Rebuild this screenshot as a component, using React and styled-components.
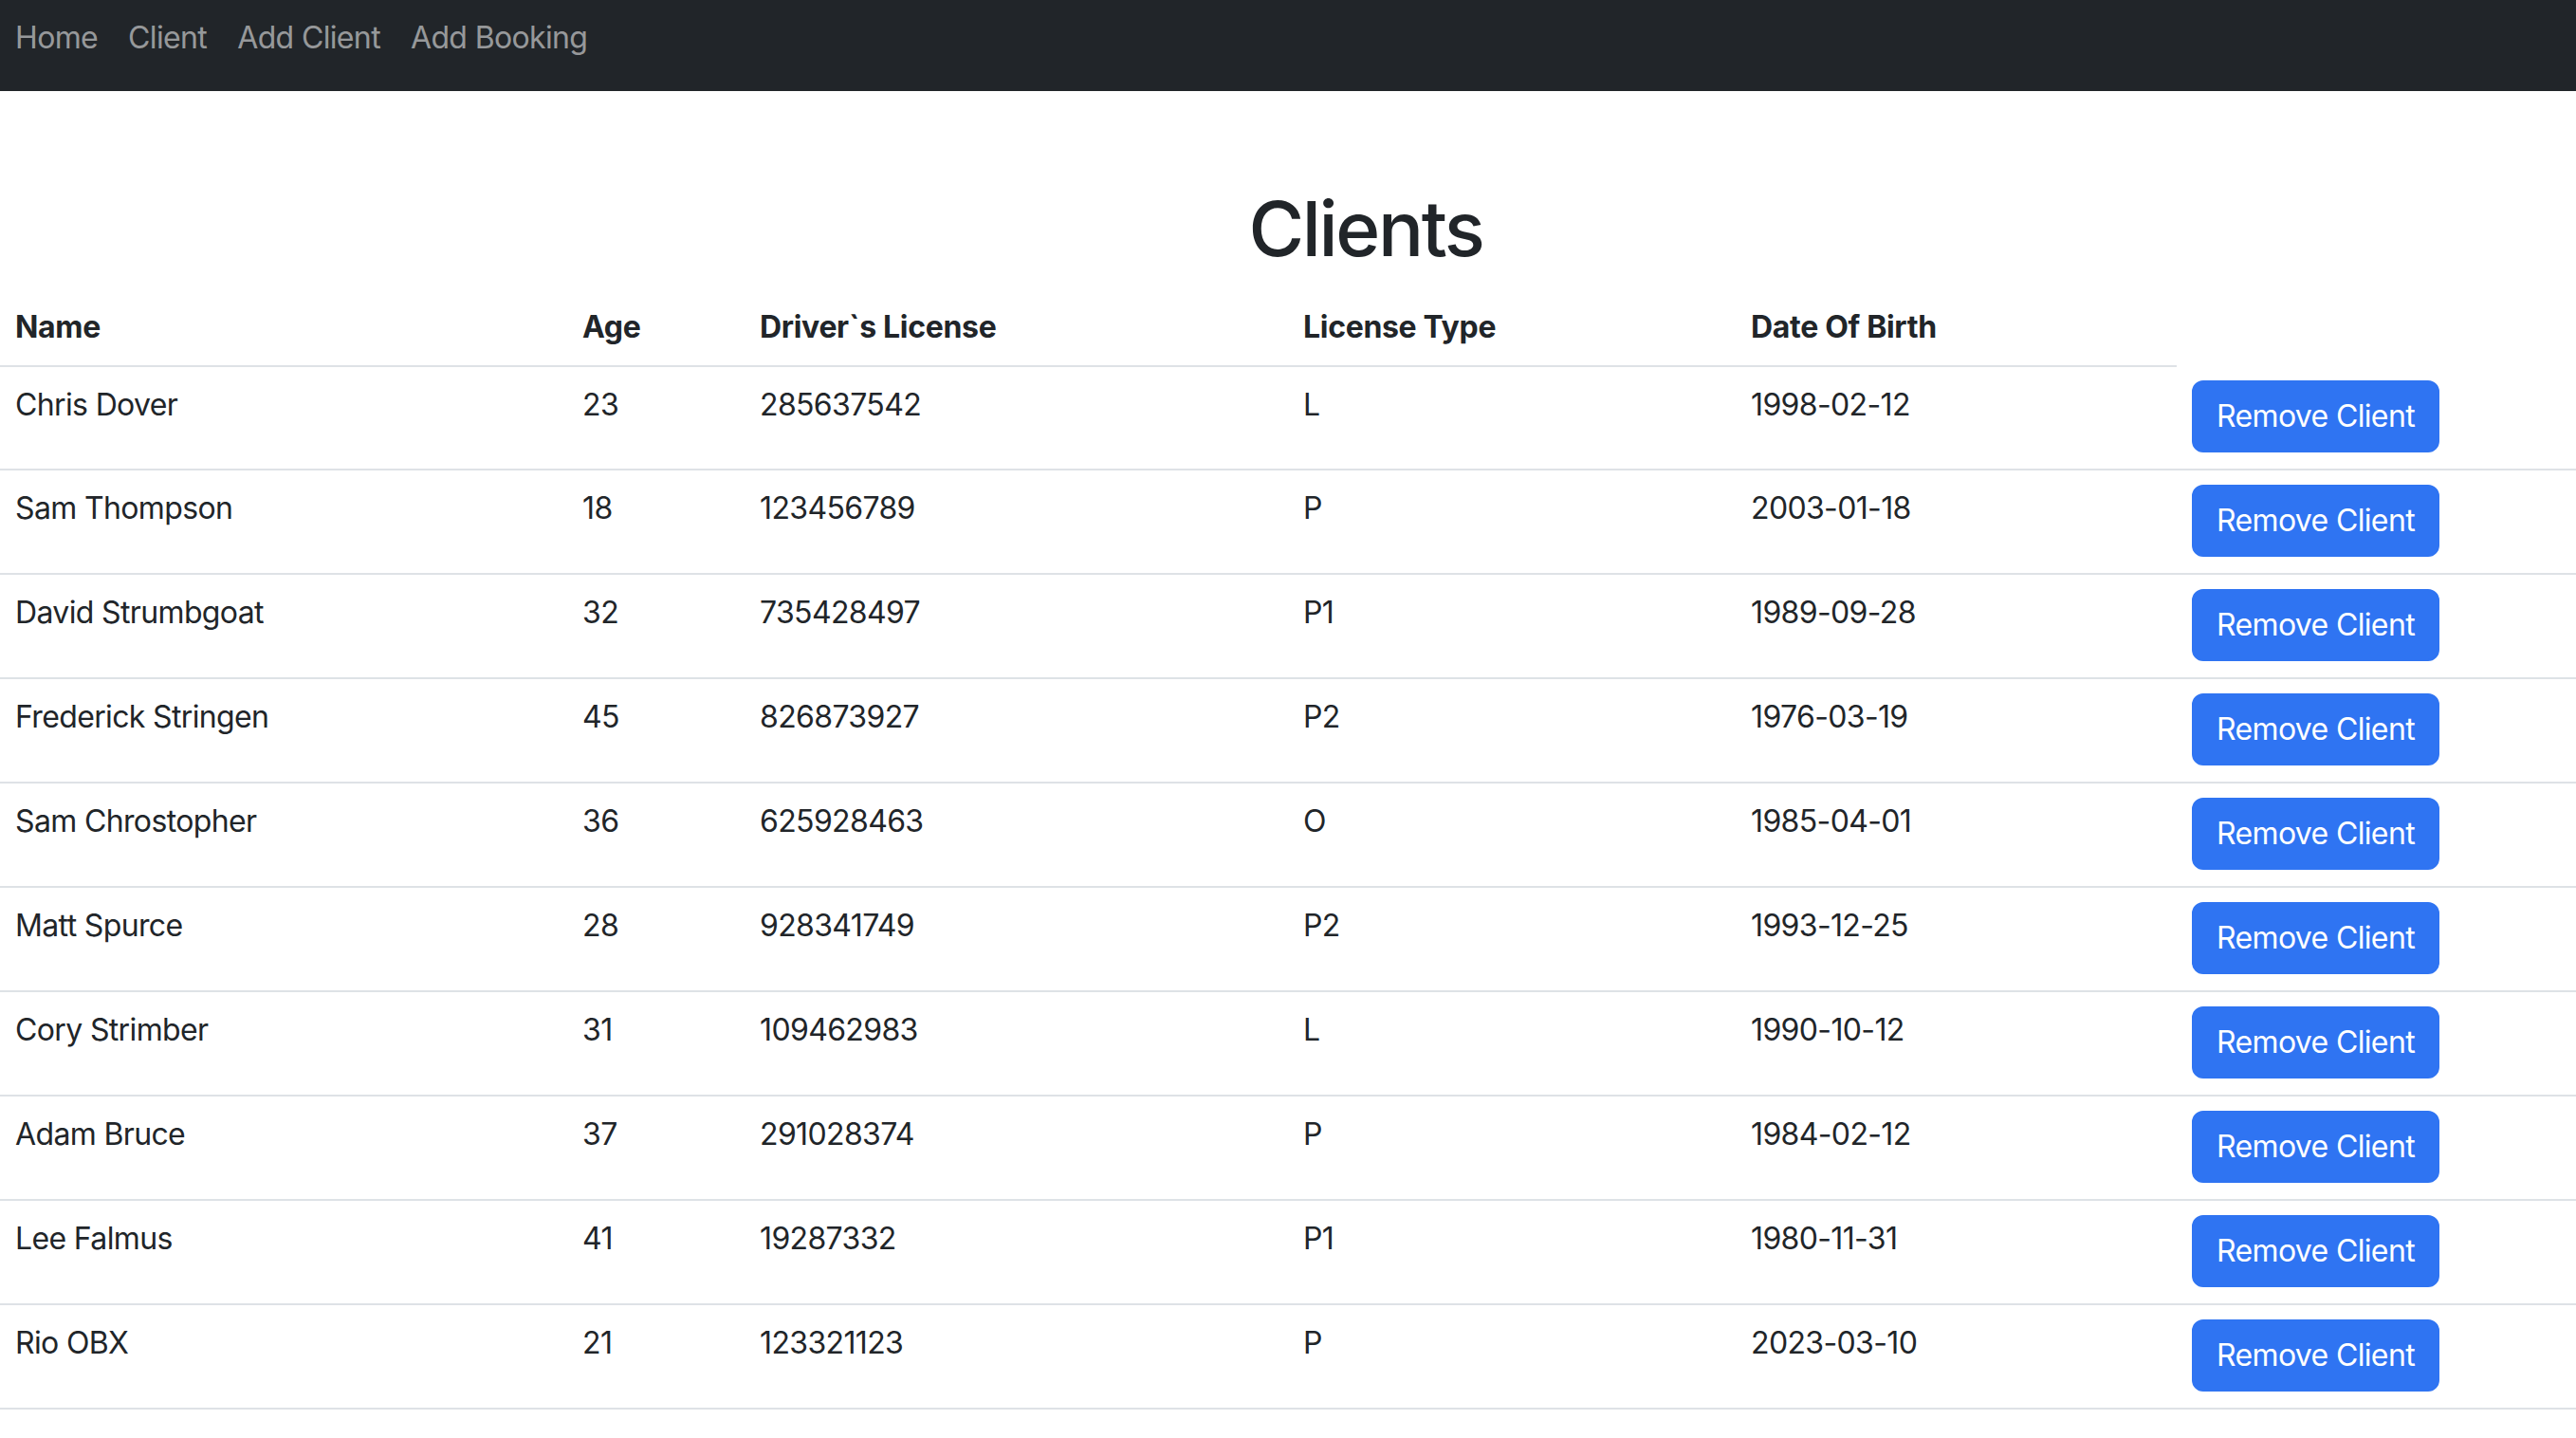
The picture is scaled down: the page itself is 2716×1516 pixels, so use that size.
import React from "react";
import styled, { createGlobalStyle } from "styled-components";

const GlobalStyle = createGlobalStyle`
  html, body {
    margin: 0;
    padding: 0;
    background: #ffffff;
  }
  body {
    font-family: Inter, "Noto Sans", "Liberation Sans", sans-serif;
    font-size: 32px;
    line-height: 1.5;
    letter-spacing: -0.02em;
    color: #212529;
  }
  *, *::before, *::after { box-sizing: border-box; }
`;

const NavBar = styled.nav`
  display: flex;
  align-items: flex-start;
  height: 96px;
  padding-top: 16px;
  background: #212529;
`;

const NavLink = styled.a`
  display: block;
  padding: 0 16px;
  font-size: 32px;
  line-height: 48px;
  color: rgba(255, 255, 255, 0.55);
  text-decoration: none;
  cursor: pointer;
`;

const Main = styled.main`
  padding-top: 97px;
`;

const Title = styled.h1`
  margin: 0 0 16px;
  padding-left: 164px;
  text-align: center;
  font-size: 80px;
  font-weight: 500;
  line-height: 1.2;
  letter-spacing: -0.03em;
  color: #212529;
`;

const Table = styled.table`
  width: 100%;
  table-layout: fixed;
  border-collapse: collapse;
  vertical-align: top;
`;

const HeadCell = styled.th`
  padding: 16px;
  text-align: left;
  font-weight: 700;
  font-size: 32px;
  line-height: 48px;
  letter-spacing: -0.01em;
  border-bottom: 2px solid #dee2e6;
`;

const Row = styled.tr`
  border-bottom: 2px solid #dee2e6;
`;

const Cell = styled.td`
  padding: 16px;
  font-size: 32px;
  line-height: 48px;
  vertical-align: top;
`;

const ButtonCell = styled(Cell)`
  padding: 15px 16px 17px;
`;

const RemoveButton = styled.button`
  display: inline-block;
  height: 76px;
  padding: 12px 24px;
  font-family: inherit;
  font-size: 32px;
  line-height: 48px;
  letter-spacing: -0.02em;
  color: #ffffff;
  background: #2f74f2;
  border: 2px solid #2f74f2;
  border-radius: 12px;
  white-space: nowrap;
  cursor: pointer;
`;

const columns = [
  { label: "Name", width: 598 },
  { label: "Age", width: 187 },
  { label: "Driver`s License", width: 573 },
  { label: "License Type", width: 472 },
  { label: "Date Of Birth", width: 465 },
  { label: null, width: 421 },
];

const clients = [
  ["Chris Dover", "23", "285637542", "L", "1998-02-12"],
  ["Sam Thompson", "18", "123456789", "P", "2003-01-18"],
  ["David Strumbgoat", "32", "735428497", "P1", "1989-09-28"],
  ["Frederick Stringen", "45", "826873927", "P2", "1976-03-19"],
  ["Sam Chrostopher", "36", "625928463", "O", "1985-04-01"],
  ["Matt Spurce", "28", "928341749", "P2", "1993-12-25"],
  ["Cory Strimber", "31", "109462983", "L", "1990-10-12"],
  ["Adam Bruce", "37", "291028374", "P", "1984-02-12"],
  ["Lee Falmus", "41", "19287332", "P1", "1980-11-31"],
  ["Rio OBX", "21", "123321123", "P", "2023-03-10"],
];

export default function App() {
  return (
    <>
      <GlobalStyle />
      <NavBar>
        <NavLink>Home</NavLink>
        <NavLink>Client</NavLink>
        <NavLink>Add Client</NavLink>
        <NavLink>Add Booking</NavLink>
      </NavBar>
      <Main>
        <Title>Clients</Title>
        <Table>
          <colgroup>
            {columns.map((c, i) => (
              <col key={i} style={{ width: c.width }} />
            ))}
          </colgroup>
          <thead>
            <tr>
              {columns
                .filter((c) => c.label)
                .map((c) => (
                  <HeadCell key={c.label}>{c.label}</HeadCell>
                ))}
            </tr>
          </thead>
          <tbody>
            {clients.map((row) => (
              <Row key={row[0]}>
                {row.map((v, i) => (
                  <Cell key={i}>{v}</Cell>
                ))}
                <ButtonCell>
                  <RemoveButton>Remove Client</RemoveButton>
                </ButtonCell>
              </Row>
            ))}
          </tbody>
        </Table>
      </Main>
    </>
  );
}
